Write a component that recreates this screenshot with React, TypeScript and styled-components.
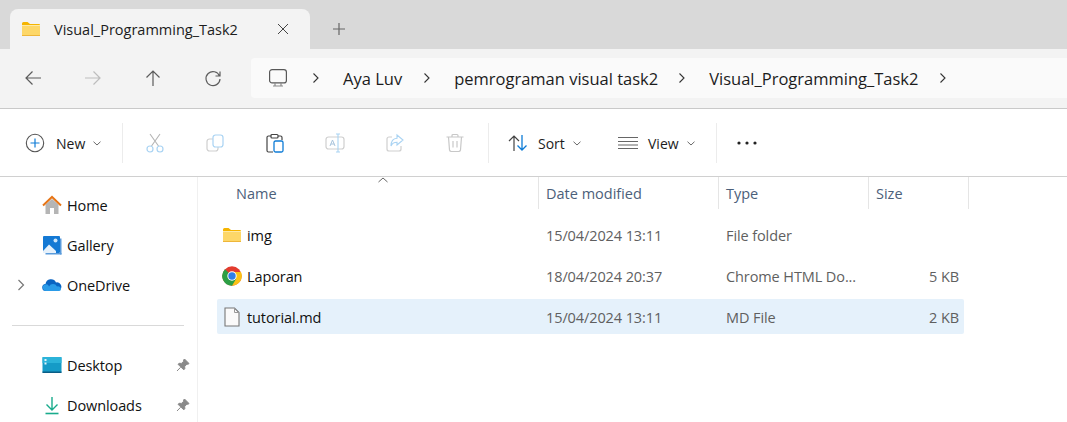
import React from "react";
import styled, { createGlobalStyle } from "styled-components";

const Global = createGlobalStyle`
  html, body { margin: 0; padding: 0; background: #fff; overflow: hidden; }
  body { font-family: "Open Sans", "Noto Sans", sans-serif; color: #1a1a1a; }
  svg { display: block; flex: none; }
`;
const Page = styled.div`width: 1067px; height: 422px; display: flex; flex-direction: column; overflow: hidden;`;
const TabBar = styled.div`height: 49px; flex: none; box-sizing: border-box; padding: 9px 0 0 10px; background: #d9d9d9; display: flex; align-items: stretch;`;
const Tab = styled.div`width: 300px; background: #f3f3f3; border-radius: 8px 8px 0 0; display: flex; align-items: center; padding: 0 0 0 11px; box-sizing: border-box; position: relative;`;
const TabTitle = styled.span`margin-left: 13px; font-size: 14.5px; white-space: nowrap; width: 223px; color: #1c1c1c;`;
const PlusBox = styled.div`margin-left: 22px; display: flex; align-items: center;`;
const NavRow = styled.div`height: 60px; flex: none; box-sizing: border-box; background: #f3f3f3; border-bottom: 1px solid #c9c9c9; display: flex; align-items: center; padding-bottom: 1px;`;
const NavButtons = styled.div`display: flex; padding-left: 3px; width: 251px; box-sizing: border-box;`;
const NavButton = styled.div`width: 60px; height: 40px; display: flex; align-items: center; justify-content: center;`;
const Address = styled.div`flex: 1; height: 40px; background: #fafafa; border-radius: 4px 0 0 4px; display: flex; align-items: center; padding-left: 17px;`;
const AddressGap = styled.span`width: 24px; flex: none;`;
const Crumb = styled.span<{ $r?: number }>`font-size: 16.5px; white-space: nowrap; color: #1c1c1c; margin: 0 ${(p) => p.$r ?? 21}px 0 23px;`;
const Toolbar = styled.div`height: 68px; flex: none; box-sizing: border-box; border-bottom: 1px solid #d0d0d0; display: flex; align-items: center; padding-left: 25px; padding-top: 1px;`;
const TextTool = styled.div<{ $w: number }>`width: ${(p) => p.$w}px; display: flex; align-items: center; height: 40px;`;
const ToolLabel = styled.span<{ $g: number; $w: number }>`font-size: 14px; margin-left: ${(p) => p.$g}px; width: ${(p) => p.$w}px; color: #1c1c1c; white-space: nowrap;`;
const IconTool = styled.div`width: 60px; height: 40px; display: flex; align-items: center; justify-content: center;`;
const ToolSep = styled.div<{ $l?: number; $r?: number }>`width: 1px; height: 40px; background: #ececec; margin-left: ${(p) => p.$l ?? 0}px; margin-right: ${(p) => p.$r ?? 0}px;`;
const Body = styled.div`flex: 1; display: flex; min-height: 0;`;
const Sidebar = styled.nav`width: 198px; flex: none; box-sizing: border-box; border-right: 1px solid #f0f0f0; padding-top: 8px; display: flex; flex-direction: column;`;
const SideRow = styled.div`height: 40px; flex: none; display: flex; align-items: center; position: relative; padding-left: 42px;`;
const SideIcon = styled.div`width: 20px; height: 20px; display: flex; align-items: center; justify-content: center; margin-right: 5px;`;
const SideText = styled.span`font-size: 14.5px; letter-spacing: -0.1px; color: #111;`;
const Expander = styled.div`position: absolute; left: 17px; top: 14px;`;
const Pin = styled.div`position: absolute; left: 176px; top: 13px;`;
const SideDivider = styled.div`height: 1px; background: #d9d9d9; margin: 20px 13px 19px 12px; flex: none; width: 172px;`;
const Main = styled.div`flex: 1; min-width: 0;`;
const Header = styled.div`height: 32px; display: grid; grid-template-columns: 340px 180px 150px 101px; position: relative;`;
const HeaderCell = styled.div<{ $first?: boolean }>`font-size: 14.5px; color: #4c607a; box-sizing: border-box; display: flex; align-items: center; padding-left: ${(p) => (p.$first ? "38px" : "7px")}; border-left: ${(p) => (p.$first ? "none" : "1px solid #e5e5e5")}; &:last-child { border-right: 1px solid #e5e5e5; }`;
const SortCaret = styled.div`position: absolute; left: 180px; top: 0;`;
const List = styled.div`padding: 8px 0 0 19px; display: flex; flex-direction: column; gap: 6px; width: 766px; box-sizing: border-box;`;
const Row = styled.div<{ $sel?: boolean }>`height: 35px; box-sizing: border-box; padding-top: 1px; display: grid; grid-template-columns: 321px 180px 150px 96px; align-items: center; background: ${(p) => (p.$sel ? "#e5f1fb" : "transparent")}; border-radius: 2px; font-size: 14.5px; letter-spacing: -0.1px; color: #5f5f5f;`;
const NameCell = styled.div`display: flex; align-items: center; color: #111; padding-left: 5px;`;
const NameIcon = styled.div`width: 20px; height: 20px; display: flex; align-items: center; justify-content: center; margin-right: 5px;`;
const Cell = styled.div`padding-left: 8px; white-space: nowrap;`;
const SizeCell = styled.div`text-align: right; padding-right: 5px;`;

const S = ({ w = 20, h = 20, vb = "0 0 20 20", children }: { w?: number; h?: number; vb?: string; children: React.ReactNode }) => (
  <svg width={w} height={h} viewBox={vb} fill="none">{children}</svg>
);
const Chevron = () => (
  <S w={8} h={12} vb="0 0 8 12"><path d="M1.500 1.500 6 6l-4.500 4.500" stroke="#333" strokeWidth="1.100" /></S>
);
const Down = () => (
  <S w={8} h={5} vb="0 0 8 5"><path d="M.5.7 4 4 7.500.7" stroke="#6a6a6a" strokeWidth="1" /></S>
);
const Folder = () => (
  <S w={20} h={16} vb="0 0 20 16">
    <path d="M1 2.500A1.500 1.500 0 0 1 2.500 1h4L9 3h9a1 1 0 0 1 1 1v2H1z" fill="#f5b400" />
    <rect x="1" y="4" width="18" height="11" rx="1" fill="#fdd768" />
    <rect x="1" y="4" width="18" height="1" fill="#fde9a6" />
    <rect x="1" y="14" width="18" height="1" fill="#eeb63a" />
  </S>
);
const Dots = () => (
  <S w={22} h={6} vb="0 0 22 6"><circle cx="3" cy="3" r="1.600" fill="#222" /><circle cx="11" cy="3" r="1.600" fill="#222" /><circle cx="19" cy="3" r="1.600" fill="#222" /></S>
);
const PinIcon = () => (
  <S w={14} h={14} vb="0 0 14 14">
    <path d="M8.500 1 13 5.500l-1 .8-1-.2-2.300 2.300.1 2.400-1 1L2 6.300l1-1 2.500.1 2.200-2.200-.1-1.200zM4.600 9.300 1 13" fill="#8a8a8a" stroke="#8a8a8a" strokeWidth="1" />
  </S>
);

export default function App() {
  return (
    <Page>
      <Global />
      <TabBar>
        <Tab>
          <Folder />
          <TabTitle>Visual_Programming_Task2</TabTitle>
          <S w={12} h={12} vb="0 0 12 12"><path d="M1 1l10 10M11 1 1 11" stroke="#444" strokeWidth="1" /></S>
        </Tab>
        <PlusBox>
          <S w={14} h={14} vb="0 0 14 14"><path d="M7 1v12M1 7h12" stroke="#666" strokeWidth="1.200" /></S>
        </PlusBox>
      </TabBar>
      <NavRow>
        <NavButtons>
          <NavButton><S><path d="M3 10h15M9.500 3.500 3 10l6.500 6.500" stroke="#5c5c5c" strokeWidth="1.200" /></S></NavButton>
          <NavButton><S><path d="M2 10h15M10.500 3.500 17 10l-6.500 6.500" stroke="#bdbdbd" strokeWidth="1.200" /></S></NavButton>
          <NavButton><S><path d="M10 18V3M3.500 9.500 10 3l6.500 6.500" stroke="#5c5c5c" strokeWidth="1.200" /></S></NavButton>
          <NavButton><S><path d="M16.500 8A7 7 0 1 0 17 11M17 3.500V8h-4.500" stroke="#5c5c5c" strokeWidth="1.200" /></S></NavButton>
        </NavButtons>
        <Address>
          <S><rect x="1.600" y="1.600" width="16.800" height="13.300" rx="2.500" stroke="#585858" strokeWidth="1.200" /><path d="M7 15v2.500M13 15v2.500M5 18h10" stroke="#8a8a8a" strokeWidth="1.200" /></S>
          <AddressGap />
          <Chevron />
          <Crumb>Aya Luv</Crumb>
          <Chevron />
          <Crumb $r={20}>pemrograman visual task2</Crumb>
          <Chevron />
          <Crumb>Visual_Programming_Task2</Crumb>
          <Chevron />
        </Address>
      </NavRow>
      <Toolbar>
        <TextTool $w={97}>
          <S><circle cx="10" cy="10" r="8.700" stroke="#555" strokeWidth="1.100" /><path d="M10 5.500v9M5.500 10h9" stroke="#0f7cd6" strokeWidth="1.200" /></S>
          <ToolLabel $g={11} $w={37}>New</ToolLabel>
          <Down />
        </TextTool>
        <ToolSep $r={2} />
        <IconTool>
          <S><path d="M5 1l8.500 12M15 1 6.500 13" stroke="#b4b4b4" strokeWidth="1.100" /><circle cx="5" cy="16" r="3" stroke="#a9d3f3" strokeWidth="1.200" /><circle cx="15" cy="16" r="3" stroke="#a9d3f3" strokeWidth="1.200" /></S>
        </IconTool>
        <IconTool>
          <S><rect x="2" y="6" width="11" height="12" rx="2.500" stroke="#cfcfcf" strokeWidth="1.200" /><rect x="8" y="2" width="10" height="12" rx="2.500" fill="#fff" stroke="#a9d3f3" strokeWidth="1.200" /></S>
        </IconTool>
        <IconTool>
          <S><path d="M6 3H3.500A1.500 1.500 0 0 0 2 4.500V17.500A1.500 1.500 0 0 0 3.500 19H8M13 3h2.500A1.500 1.500 0 0 1 17 4.500V7" stroke="#444" strokeWidth="1.200" /><rect x="6" y="1.500" width="7" height="3.500" rx="1" fill="#fff" stroke="#444" strokeWidth="1.200" /><rect x="9" y="8" width="9" height="11" rx="1.500" fill="#fff" stroke="#0f7cd6" strokeWidth="1.300" /></S>
        </IconTool>
        <IconTool>
          <S><rect x="1" y="4" width="18" height="12" rx="2.500" stroke="#cfcfcf" strokeWidth="1.200" /><path d="M5 13l2.500-6 2.500 6M5.800 11h3.500" stroke="#a9c4dc" strokeWidth="1" /><path d="M13 1v18M11 1h4M11 19h4" stroke="#a9d3f3" strokeWidth="1.100" /></S>
        </IconTool>
        <IconTool>
          <S><path d="M7 4H4a2 2 0 0 0-2 2v10a2 2 0 0 0 2 2h10a2 2 0 0 0 2-2v-3" stroke="#cfcfcf" strokeWidth="1.200" /><path d="M12 2l6 5-6 5V9.300C9 9.300 7 10.500 6 13c0-4 2-7.500 6-7.800z" stroke="#a9d3f3" strokeWidth="1.100" /></S>
        </IconTool>
        <IconTool>
          <S><path d="M1.500 4h17M7 4V2.500A1 1 0 0 1 8 1.500h4a1 1 0 0 1 1 1V4M3.500 4l1 13a2 2 0 0 0 2 1.500h7a2 2 0 0 0 2-1.500l1-13M8 8v6.500M12 8v6.500" stroke="#c8c8c8" strokeWidth="1.200" /></S>
        </IconTool>
        <ToolSep $l={3} $r={19} />
        <TextTool $w={110}>
          <S><path d="M6 18V3M1 8l5-5 5 5" stroke="#444" strokeWidth="1.200" /><path d="M14 2v15M9.500 12.500 14 17l4.500-4.500" stroke="#0f7cd6" strokeWidth="1.300" /></S>
          <ToolLabel $g={10} $w={35}>Sort</ToolLabel>
          <Down />
        </TextTool>
        <TextTool $w={98}>
          <S><path d="M0 4.500h20M0 8.500h20M0 12h20M0 15.500h20" stroke="#666" strokeWidth="1.200" /></S>
          <ToolLabel $g={10} $w={39}>View</ToolLabel>
          <Down />
        </TextTool>
        <ToolSep $r={19} />
        <Dots />
      </Toolbar>
      <Body>
        <Sidebar>
          <SideRow>
            <SideIcon><S><path d="M3.500 9.500 10 4l6.500 5.500V19H12v-6H8v6H3.500z" fill="#b5b5b5" /><path d="M1 10.500 10 2l9 8.500" stroke="#e67517" strokeWidth="2" /></S></SideIcon>
            <SideText>Home</SideText>
          </SideRow>
          <SideRow>
            <SideIcon><S><rect x="1" y="1" width="17" height="17" rx="1" fill="#1479d4" /><rect x="3.500" y="18" width="16" height="1.500" fill="#5a9bdb" /><rect x="18" y="3.500" width="1.500" height="16" fill="#5a9bdb" /><path d="M1 16l6-6.500L14 16v2H1z" fill="#e6f1fb" /><circle cx="13.500" cy="5.500" r="2" fill="#cde6fa" /></S></SideIcon>
            <SideText>Gallery</SideText>
          </SideRow>
          <SideRow>
            <Expander><S w={8} h={12} vb="0 0 8 12"><path d="M1.500 1 6.500 6l-5 5" stroke="#777" strokeWidth="1.200" /></S></Expander>
            <SideIcon><S><path d="M4 16a3.500 3.500 0 0 1-.500-7A5.500 5.500 0 0 1 14 7.500a4.200 4.200 0 0 1 2 8.500z" fill="#0a64c2" /><path d="M1 13.500A3 3 0 0 1 7 11.500a4.500 4.500 0 0 1 8 0 3 3 0 0 1 4 2.500 2 2 0 0 1-2 2H4a3 3 0 0 1-3-2.500z" fill="#2a9be8" /></S></SideIcon>
            <SideText>OneDrive</SideText>
          </SideRow>
          <SideDivider />
          <SideRow>
            <SideIcon><S><rect x="0.500" y="2" width="19" height="16" rx="1" fill="#159bc7" /><rect x="0.500" y="2" width="19" height="6" fill="#2bb3d9" /><rect x="2.500" y="4" width="2" height="2" fill="#dff4fb" /><rect x="2.500" y="7.500" width="2" height="2" fill="#dff4fb" /><rect x="0.500" y="16.500" width="19" height="1.500" fill="#0a5d85" /></S></SideIcon>
            <SideText>Desktop</SideText>
            <Pin><PinIcon /></Pin>
          </SideRow>
          <SideRow>
            <SideIcon><S><path d="M10 2v13M4.500 9.500 10 15l5.500-5.500" stroke="#19ab8c" strokeWidth="1.400" /><path d="M3.500 18.500h13" stroke="#19ab8c" strokeWidth="1.600" /></S></SideIcon>
            <SideText>Downloads</SideText>
            <Pin><PinIcon /></Pin>
          </SideRow>
        </Sidebar>
        <Main>
          <Header>
            <SortCaret><S w={10} h={6} vb="0 0 10 6"><path d="M.5 5 5 1l4.500 4" stroke="#666" strokeWidth="1" /></S></SortCaret>
            <HeaderCell $first>Name</HeaderCell>
            <HeaderCell>Date modified</HeaderCell>
            <HeaderCell>Type</HeaderCell>
            <HeaderCell>Size</HeaderCell>
          </Header>
          <List>
            <Row>
              <NameCell><NameIcon><Folder /></NameIcon>img</NameCell>
              <Cell>15/04/2024 13:11</Cell>
              <Cell>File folder</Cell>
              <SizeCell />
            </Row>
            <Row>
              <NameCell>
                <NameIcon>
                  <S>
                    <circle cx="10" cy="10" r="9.700" fill="#e33b2e" />
                    <path d="M10 6h9a9.700 9.700 0 0 1-9 13.700l-4-5z" fill="#fbc116" />
                    <path d="M10 10 3 3.200A9.700 9.700 0 0 0 10 19.700L14 13z" fill="#2c9f45" />
                    <circle cx="10" cy="10" r="4.700" fill="#fff" />
                    <circle cx="10" cy="10" r="3.700" fill="#2f7ee8" />
                  </S>
                </NameIcon>
                Laporan
              </NameCell>
              <Cell>18/04/2024 20:37</Cell>
              <Cell>Chrome HTML Do...</Cell>
              <SizeCell>5 KB</SizeCell>
            </Row>
            <Row $sel>
              <NameCell>
                <NameIcon><S w={16} h={20} vb="0 0 16 20"><path d="M1 1h9.500L15 5.500V19H1z" fill="#fafafa" stroke="#777" strokeWidth="1.100" /><path d="M10.500 1v4.500H15" stroke="#999" strokeWidth="1" /></S></NameIcon>
                tutorial.md
              </NameCell>
              <Cell>15/04/2024 13:11</Cell>
              <Cell>MD File</Cell>
              <SizeCell>2 KB</SizeCell>
            </Row>
          </List>
        </Main>
      </Body>
    </Page>
  );
}
